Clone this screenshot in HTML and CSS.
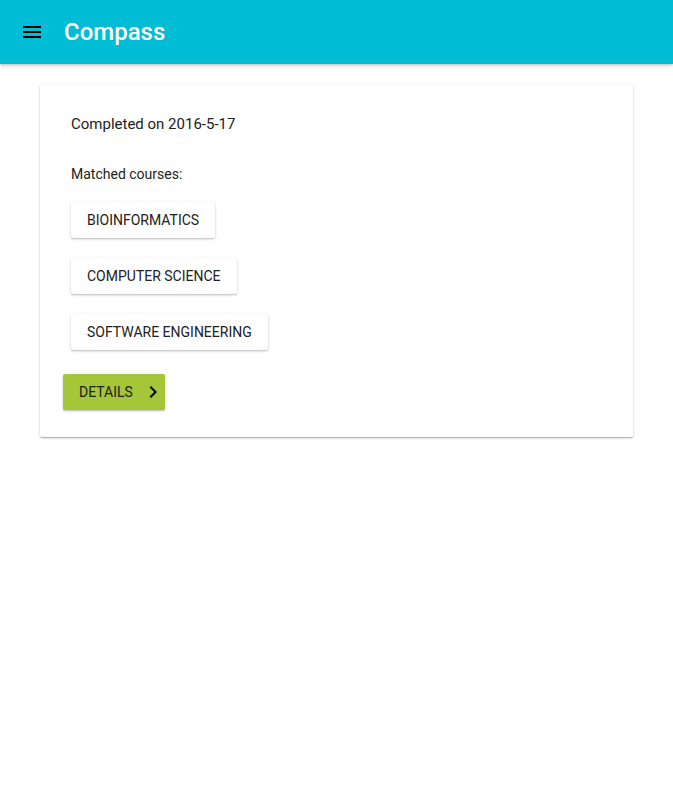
FILE: index.html
```html
<!DOCTYPE html>
<html>
<head>
<meta charset="utf-8">
<link rel="stylesheet" href="styles.css">
</head>
<body>
<header class="toolbar">
  <button class="menu-btn" aria-label="Menu">
    <svg viewBox="0 0 24 24" width="24" height="24"><path d="M3 18h18v-2H3v2zm0-5h18v-2H3v2zm0-7v2h18V6H3z" fill="#000"/></svg>
  </button>
  <h1 class="title">Compass</h1>
</header>
<main class="content">
  <section class="card">
    <div class="card-body">
      <p class="completed">Completed on 2016-5-17</p>
      <p class="matched">Matched courses:</p>
      <div class="courses">
        <button class="course">Bioinformatics</button>
        <button class="course">Computer Science</button>
        <button class="course">Software Engineering</button>
      </div>
    </div>
    <div class="card-actions">
      <button class="details">Details
        <svg viewBox="0 0 24 24" width="24" height="24"><path d="M10 6L8.59 7.41 13.17 12l-4.58 4.59L10 18l6-6z" fill="#000"/></svg>
      </button>
    </div>
  </section>
</main>
</body>
</html>
```

FILE: styles.css
```css
* { box-sizing: border-box; }
html, body {
  margin: 0;
  padding: 0;
  background: #fff;
  font-family: Roboto, "Noto Sans", Arial, sans-serif;
  color: #212121;
}
.toolbar {
  height: 64px;
  background: #00bcd4;
  display: flex;
  align-items: center;
  padding-left: 20px;
  box-shadow: 0 2px 4px rgba(0,0,0,0.16), 0 1px 2px rgba(0,0,0,0.1);
  position: relative;
  z-index: 1;
}
.menu-btn {
  width: 24px;
  height: 24px;
  padding: 0;
  border: 0;
  background: none;
  display: flex;
}
.title {
  margin: 0 0 0 20px;
  font-size: 24px;
  font-weight: 500;
  color: #fff;
}
.content {
  padding: 20px 40px;
}
.card {
  background: #fff;
  border-radius: 2px;
  box-shadow: 0 1px 3px rgba(0,0,0,0.2), 0 1px 1px rgba(0,0,0,0.12), 0 2px 1px -1px rgba(0,0,0,0.1);
  padding-bottom: 27px;
}
.card-body {
  padding: 28px 31px 0;
}
.completed {
  margin: 0;
  font-size: 15px;
  line-height: 24px;
}
.matched {
  margin: 28px 0 0;
  font-size: 14px;
  line-height: 20px;
}
.courses {
  display: flex;
  flex-direction: column;
  align-items: flex-start;
  gap: 20px;
  margin-top: 18px;
}
.course {
  height: 36px;
  padding: 0 16px;
  border: 0;
  border-radius: 2px;
  background: #fff;
  font-family: inherit;
  font-size: 14px;
  font-weight: 400;
  text-transform: uppercase;
  color: #212121;
  box-shadow: 0 1px 3px rgba(0,0,0,0.2), 0 1px 1px rgba(0,0,0,0.1);
}
.card-actions {
  padding: 24px 23px 0;
  display: flex;
}
.details {
  height: 36px;
  padding: 0 0 0 16px;
  border: 0;
  border-radius: 2px;
  background: #a4c639;
  font-family: inherit;
  font-size: 14px;
  text-transform: uppercase;
  color: #212121;
  display: flex;
  align-items: center;
  gap: 8px;
  box-shadow: 0 1px 3px rgba(0,0,0,0.2), 0 1px 1px rgba(0,0,0,0.1);
}
.details svg { display: block; }
```
